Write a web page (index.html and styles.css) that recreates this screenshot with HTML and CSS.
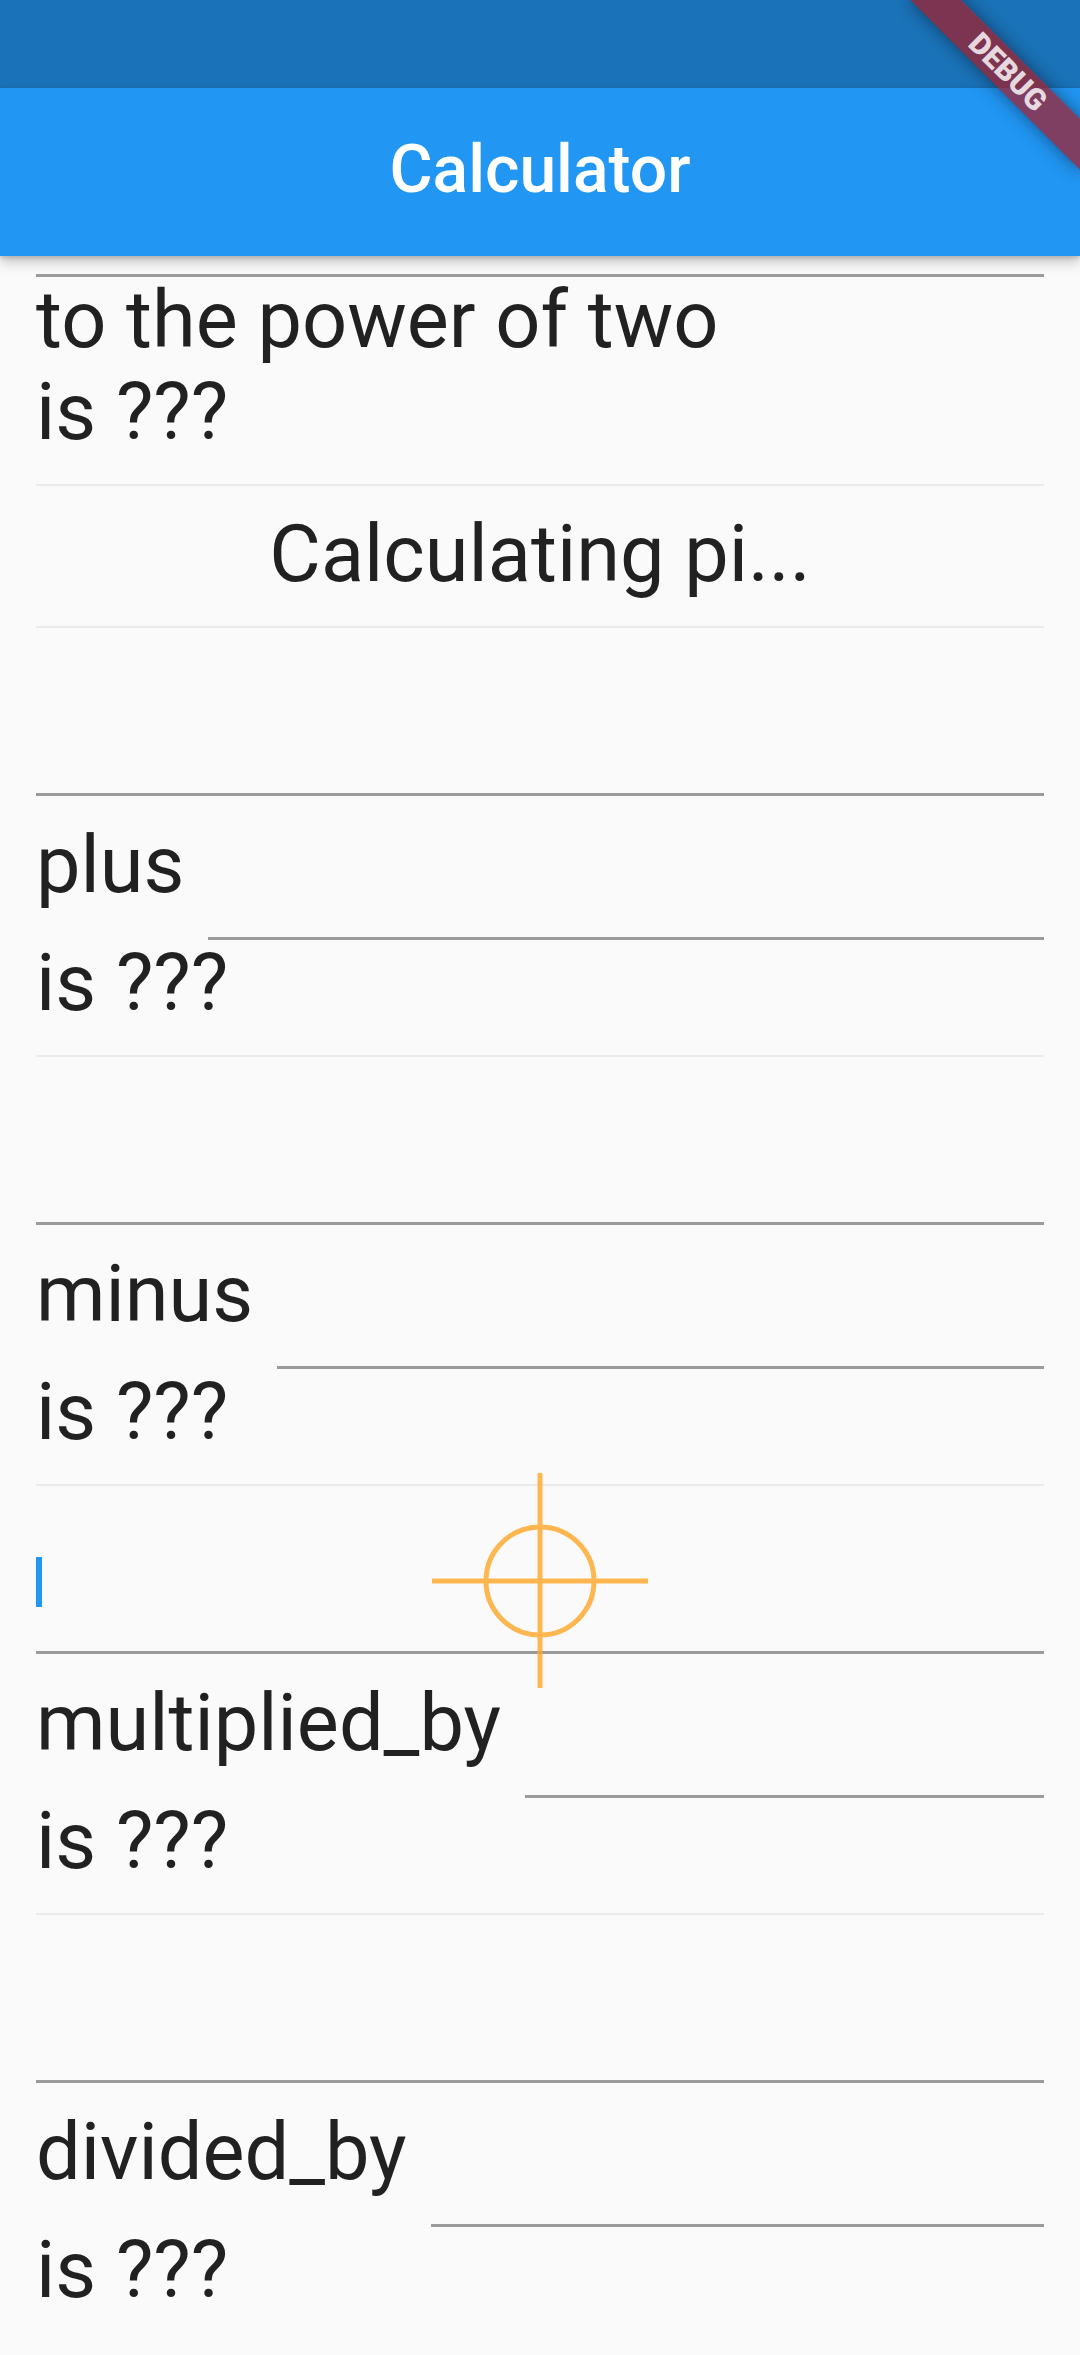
FILE: index.html
```html
<!DOCTYPE html>
<html lang="en">
<head>
<meta charset="utf-8">
<title>Calculator</title>
<link rel="stylesheet" href="styles.css">
</head>
<body>
<div class="screen">
  <header class="top">
    <div class="status-bar"></div>
    <div class="app-bar"><h1 class="title">Calculator</h1></div>
  </header>

  <main class="content">
    <div class="field field-clipped"></div>
    <p class="line">to the power of two</p>
    <p class="line">is ???</p>
    <hr class="divider">
    <p class="line line-center">Calculating pi...</p>
    <hr class="divider">

    <section class="op">
      <div class="field"></div>
      <div class="op-row"><span class="line op-label">plus</span><div class="field field-row"></div></div>
      <p class="line">is ???</p>
      <hr class="divider">
    </section>

    <section class="op">
      <div class="field"></div>
      <div class="op-row"><span class="line op-label">minus</span><div class="field field-row"></div></div>
      <p class="line">is ???</p>
      <hr class="divider">
    </section>

    <section class="op">
      <div class="field field-focused"><span class="cursor"></span></div>
      <div class="op-row"><span class="line op-label">multiplied_by</span><div class="field field-row"></div></div>
      <p class="line">is ???</p>
      <hr class="divider">
    </section>

    <section class="op">
      <div class="field"></div>
      <div class="op-row"><span class="line op-label">divided_by</span><div class="field field-row"></div></div>
      <p class="line">is ???</p>
    </section>
  </main>

  <div class="debug-corner"><div class="debug-ribbon">DEBUG</div></div>

  <svg class="crosshair" width="220" height="220" viewBox="0 0 220 220" aria-hidden="true">
    <g opacity="0.8" stroke="#FFA726" stroke-width="5" fill="none">
      <line x1="110" y1="2" x2="110" y2="217"/>
      <line x1="2" y1="110" x2="218" y2="110"/>
      <circle cx="110" cy="110" r="54"/>
    </g>
  </svg>
</div>
</body>
</html>
```

FILE: styles.css
```css
html, body {
  margin: 0;
  padding: 0;
}

body {
  background: #fafafa;
  font-family: Roboto, "Noto Sans", "Liberation Sans", sans-serif;
}

.screen {
  position: relative;
  width: 1080px;
  height: 2355px;
  overflow: hidden;
  background: #fafafa;
}

.top {
  position: relative;
  z-index: 2;
}

.status-bar {
  height: 88px;
  background: #1a72b8;
}

.app-bar {
  height: 168px;
  background: #2196f3;
  display: flex;
  align-items: center;
  justify-content: center;
  box-shadow: 0 6px 12px rgba(0, 0, 0, 0.22), 0 2px 4px rgba(0, 0, 0, 0.14);
}

.title {
  margin: 0;
  font-size: 66px;
  font-weight: 500;
  line-height: 80px;
  color: #ffffff;
  padding-bottom: 4px;
}

.content {
  padding: 0 36px;
}

.field {
  box-sizing: border-box;
  height: 145px;
  border-bottom: 3px solid rgba(0, 0, 0, 0.38);
}

.field-clipped {
  height: 21px;
}

.field-focused {
  display: flex;
  align-items: center;
}

.cursor {
  display: block;
  width: 6px;
  height: 50px;
  margin-top: 4px;
  background: #2196f3;
}

.line {
  margin: 0;
  font-size: 79.3px;
  line-height: 86px;
  padding-bottom: 6px;
  color: rgba(0, 0, 0, 0.87);
  white-space: nowrap;
}

.line-center {
  text-align: center;
  padding-top: 2px;
}

.divider {
  border: none;
  height: 2px;
  margin: 23px 0;
  background: #ebebeb;
}

.op-row {
  display: flex;
  align-items: center;
  height: 144px;
}

.op-label {
  flex: none;
  padding-right: 24px;
}

.field-row {
  flex: 1;
  height: 144px;
}

.debug-corner {
  position: absolute;
  top: 0;
  right: 0;
  width: 300px;
  height: 300px;
  overflow: hidden;
  z-index: 5;
  pointer-events: none;
}

.debug-ribbon {
  position: absolute;
  left: 180px;
  top: 84px;
  width: 240px;
  height: 36px;
  transform-origin: 120px -84px;
  transform: rotate(45deg);
  background: rgba(168, 26, 36, 0.7);
  box-shadow: 0 0 18px rgba(0, 0, 0, 0.45);
  color: rgba(255, 255, 255, 0.82);
  font-size: 30px;
  font-weight: 900;
  line-height: 36px;
  text-align: center;
}

.crosshair {
  position: absolute;
  left: 430px;
  top: 1471px;
  z-index: 4;
}
```
